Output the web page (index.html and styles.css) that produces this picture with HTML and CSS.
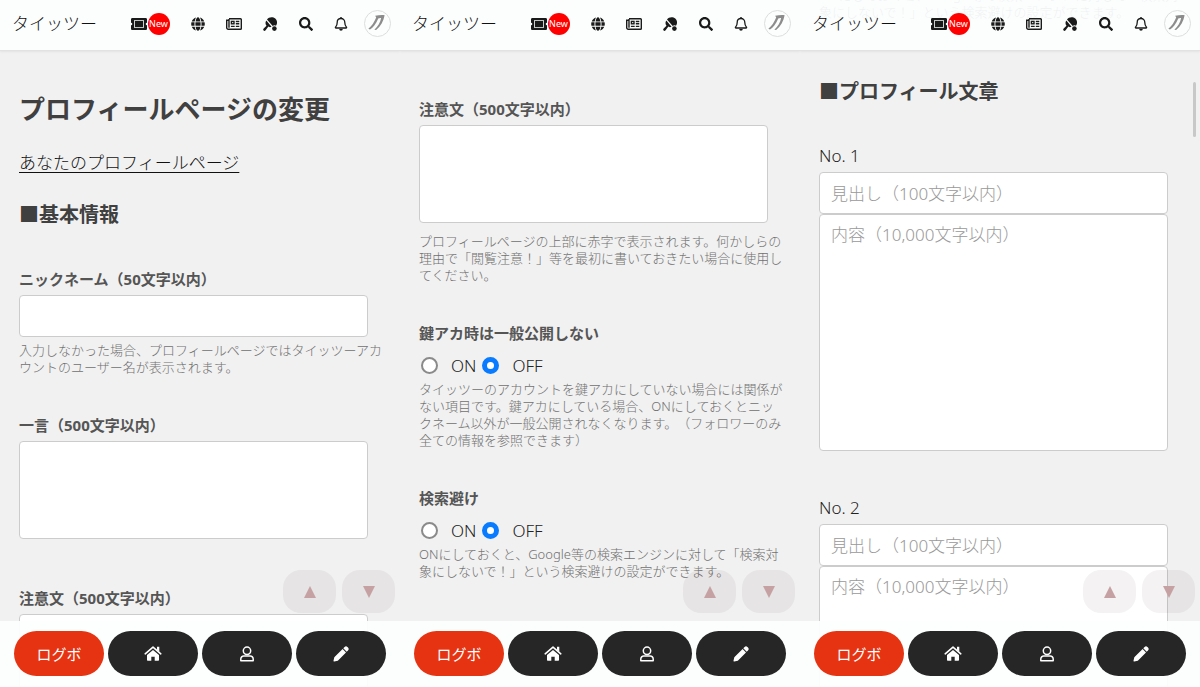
FILE: index.html
```html
<!DOCTYPE html>
<html lang="ja">
<head>
<meta charset="utf-8">
<meta name="viewport" content="width=device-width, initial-scale=1">
<title>プロフィールページの変更</title>
<link rel="stylesheet" href="styles.css">
</head>
<body>
<svg class="sprite" aria-hidden="true">
  <symbol id="i-ticket" viewBox="0 0 16 12">
    <path fill-rule="evenodd" d="M1.300 0h13.400c.7 0 1.300.6 1.300 1.300v3.400a1.300 1.300 0 0 0 0 2.600v3.400c0 .7-.6 1.300-1.300 1.300H1.300C.6 12 0 11.400 0 10.700V7.300a1.300 1.300 0 0 0 0-2.600V1.300C0 .6.600 0 1.300 0zM3 2.200v7.600h10V2.200z"/>
    <rect x="3.800" y="3" width="8.400" height="6"/>
  </symbol>
  <symbol id="i-globe" viewBox="0 0 496 512">
    <path d="M336.500 160C322 70.700 287.800 8 248 8s-74 62.700-88.500 152h177zM152 256c0 22.200 1.200 43.500 3.300 64h185.300c2.100-20.500 3.300-41.800 3.300-64s-1.200-43.500-3.300-64H155.300c-2.100 20.500-3.300 41.800-3.300 64zm324.700-96c-28.600-67.900-86.500-120.400-158-141.600 24.400 33.800 41.200 84.700 50 141.600h108zM177.200 18.400C105.800 39.600 47.800 92.100 19.300 160h108c8.700-56.900 25.500-107.800 49.900-141.600zM487.400 192H372.700c2.100 21 3.300 42.500 3.300 64s-1.200 43-3.300 64h114.600c5.500-20.500 8.600-41.800 8.600-64s-3.100-43.500-8.500-64zM120 256c0-21.500 1.200-43 3.300-64H8.600C3.200 212.500 0 233.800 0 256s3.200 43.500 8.600 64h114.600c-2-21-3.200-42.500-3.200-64zm39.500 96c14.500 89.300 48.700 152 88.500 152s74-62.700 88.500-152h-177zm159.300 141.600c71.400-21.200 129.400-73.700 158-141.600h-108c-8.800 56.900-25.600 107.800-50 141.600zM19.300 352c28.600 67.900 86.500 120.400 158 141.600-24.400-33.800-41.200-84.700-50-141.600h-108z"/>
  </symbol>
  <symbol id="i-news" viewBox="0 0 16 12">
    <g fill="none" stroke="currentColor" stroke-width="1.400">
      <path d="M3 .8h11.500a.8.800 0 0 1 .8.800v8.800a.8.800 0 0 1-.8.800H2.200A1.500 1.500 0 0 1 .7 9.700V2.200H3M3 1v8.700"/>
      <rect x="5.400" y="3.400" width="2.600" height="2.400"/>
      <path d="M9.800 3.500h3.500M9.800 5.800h3.500M4.900 8.400h3.800M9.800 8.400h3.500"/>
    </g>
  </symbol>
  <symbol id="i-pingpong" viewBox="0 0 14 14">
    <path d="M4 2.500C5.800-.2 9.900-.6 12.300 1.600c2.200 2.100 2.200 5.200.7 7.100a3.300 3.300 0 0 0-3.300.3z"/>
    <path d="M3.300 3.500l5.300 6.200-1.700.5-1.500-.8-2.800 3.900c-.6.700-1.400.8-2 .2-.6-.6-.5-1.400.1-2l2.800-2.700C2.200 7.300 2.200 5.200 3.300 3.500z"/>
    <circle cx="11.400" cy="11.600" r="2.300"/>
  </symbol>
  <symbol id="i-search" viewBox="0 0 512 512">
    <path d="M505 442.700L405.300 343c-4.500-4.500-10.600-7-17-7H372c27.600-35.300 44-79.700 44-128C416 93.100 322.900 0 208 0S0 93.100 0 208s93.100 208 208 208c48.300 0 92.700-16.400 128-44v16.300c0 6.400 2.500 12.500 7 17l99.700 99.700c9.400 9.400 24.600 9.400 33.900 0l28.300-28.300c9.400-9.400 9.400-24.600.1-34zM208 336c-70.700 0-128-57.200-128-128 0-70.700 57.200-128 128-128 70.700 0 128 57.200 128 128 0 70.700-57.200 128-128 128z"/>
  </symbol>
  <symbol id="i-bell" viewBox="0 0 14 14">
    <path fill="none" stroke="currentColor" stroke-width="1.300" stroke-linejoin="round" d="M7 1.500c-2.300 0-3.800 1.700-3.800 3.900 0 2.900-.9 3.700-1.700 4.700-.3.400 0 .9.400.9h10.200c.4 0 .7-.5.400-.9-.8-1-1.700-1.800-1.700-4.700 0-2.200-1.500-3.900-3.800-3.900z"/>
    <path d="M6.300 0h1.400v1.700H6.300zM5.200 12h3.600a1.800 1.800 0 0 1-3.600 0z"/>
  </symbol>
  <symbol id="i-avatar" viewBox="0 0 27 27">
    <path fill="#8c8c8c" d="M11 5.200c3.300-.8 6.500-.8 10.200-.7-1.200 6.600-4.200 12-9.200 16l-1.900-.3c4-3.800 6.400-8 7.300-12.700-1.500 0-2.300.1-3.200.8-2.200 5.400-5.300 9.600-8.800 11.600l-1.800-.7C7.200 16.300 10 12 12.100 7z"/>
  </symbol>
  <symbol id="i-home" viewBox="0 0 18 15">
    <path fill="none" stroke="currentColor" stroke-width="1.600" stroke-linecap="round" stroke-linejoin="round" d="M1.200 7.800L9 1.100l7.800 6.700"/>
    <path d="M13 .8h2.300v5L13 3.800zM9 3.900l6 5.200v5a.7.700 0 0 1-.7.700h-3.600v-4H7.300v4H3.700a.7.700 0 0 1-.7-.7v-5z"/>
  </symbol>
  <symbol id="i-user" viewBox="0 0 14 16">
    <g fill="none" stroke="currentColor" stroke-width="1.500" stroke-linejoin="round">
      <circle cx="7" cy="4.800" r="3.700"/>
      <path d="M3.700 10h6.600a2.900 2.900 0 0 1 2.900 2.900v1.900H.8v-1.900A2.900 2.900 0 0 1 3.700 10z"/>
    </g>
  </symbol>
  <symbol id="i-pencil" viewBox="0 0 16 16">
    <path d="M9.600 3l3.400 3.400-8.200 8.300-3.600.8a.6.600 0 0 1-.7-.7l.8-3.600zM10.300 2.300l1.300-1.300a2 2 0 0 1 2.800 0l.6.600a2 2 0 0 1 0 2.800l-1.300 1.300z"/>
  </symbol>
</svg>

<main class="screens">
  <section class="screen">
    <header class="topbar">
      <a class="brand" href="#">タイッツー</a>
      <nav class="tools">
        <a class="tool tool-ticket" href="#" aria-label="チケット"><svg class="icon-wide"><use href="#i-ticket"/></svg><span class="badge">New</span></a>
        <a class="tool" href="#" aria-label="グローバル"><svg class="icon"><use href="#i-globe"/></svg></a>
        <a class="tool" href="#" aria-label="ニュース"><svg class="icon-wide"><use href="#i-news"/></svg></a>
        <a class="tool" href="#" aria-label="ゲーム"><svg class="icon"><use href="#i-pingpong"/></svg></a>
        <a class="tool tool-slim" href="#" aria-label="検索"><svg class="icon"><use href="#i-search"/></svg></a>
        <a class="tool tool-slim" href="#" aria-label="通知"><svg class="icon"><use href="#i-bell"/></svg></a>
        <a class="avatar" href="#" aria-label="アカウント"><svg><use href="#i-avatar"/></svg></a>
      </nav>
    </header>
    <form class="content content-top">
      <h1 class="title">プロフィールページの変更</h1>
      <p class="profile-link"><a href="#">あなたのプロフィールページ</a></p>
      <h2 class="heading">■基本情報</h2>
      <div class="field">
        <label class="label" for="nick">ニックネーム（50文字以内）</label>
        <input class="control" id="nick" type="text">
        <p class="help">入力しなかった場合、プロフィールページではタイッツーアカウントのユーザー名が表示されます。</p>
      </div>
      <div class="field">
        <label class="label" for="word">一言（500文字以内）</label>
        <textarea class="control area" id="word"></textarea>
      </div>
      <div class="field">
        <label class="label" for="caution1">注意文（500文字以内）</label>
        <textarea class="control area" id="caution1"></textarea>
      </div>
    </form>
    <div class="jump">
      <button class="jump-btn" type="button" aria-label="上へ"><svg viewBox="0 0 12 12"><path d="M6 0l6 12H0z"/></svg></button>
      <button class="jump-btn" type="button" aria-label="下へ"><svg viewBox="0 0 12 12"><path d="M0 0h12L6 12z"/></svg></button>
    </div>
    <footer class="bottombar">
      <button class="pill pill-red" type="button">ログボ</button>
      <button class="pill" type="button" aria-label="ホーム"><svg class="pill-home"><use href="#i-home"/></svg></button>
      <button class="pill" type="button" aria-label="プロフィール"><svg class="pill-icon"><use href="#i-user"/></svg></button>
      <button class="pill" type="button" aria-label="投稿"><svg class="pill-icon"><use href="#i-pencil"/></svg></button>
    </footer>
  </section>

  <section class="screen">
    <header class="topbar">
      <a class="brand" href="#">タイッツー</a>
      <nav class="tools">
        <a class="tool tool-ticket" href="#" aria-label="チケット"><svg class="icon-wide"><use href="#i-ticket"/></svg><span class="badge">New</span></a>
        <a class="tool" href="#" aria-label="グローバル"><svg class="icon"><use href="#i-globe"/></svg></a>
        <a class="tool" href="#" aria-label="ニュース"><svg class="icon-wide"><use href="#i-news"/></svg></a>
        <a class="tool" href="#" aria-label="ゲーム"><svg class="icon"><use href="#i-pingpong"/></svg></a>
        <a class="tool tool-slim" href="#" aria-label="検索"><svg class="icon"><use href="#i-search"/></svg></a>
        <a class="tool tool-slim" href="#" aria-label="通知"><svg class="icon"><use href="#i-bell"/></svg></a>
        <a class="avatar" href="#" aria-label="アカウント"><svg><use href="#i-avatar"/></svg></a>
      </nav>
    </header>
    <form class="content content-middle">
      <div class="field">
        <label class="label" for="caution2">注意文（500文字以内）</label>
        <textarea class="control area" id="caution2"></textarea>
        <p class="help">プロフィールページの上部に赤字で表示されます。何かしらの理由で「閲覧注意！」等を最初に書いておきたい場合に使用してください。</p>
      </div>
      <fieldset class="field">
        <legend class="label">鍵アカ時は一般公開しない</legend>
        <div class="choices">
          <label class="choice"><input type="radio" name="locked">ON</label>
          <label class="choice"><input type="radio" name="locked" checked>OFF</label>
        </div>
        <p class="help">タイッツーのアカウントを鍵アカにしていない場合には関係がない項目です。鍵アカにしている場合、ONにしておくとニックネーム以外が一般公開されなくなります。（フォロワーのみ全ての情報を参照できます）</p>
      </fieldset>
      <fieldset class="field">
        <legend class="label">検索避け</legend>
        <div class="choices">
          <label class="choice"><input type="radio" name="noindex">ON</label>
          <label class="choice"><input type="radio" name="noindex" checked>OFF</label>
        </div>
        <p class="help">ONにしておくと、Google等の検索エンジンに対して「検索対象にしないで！」という検索避けの設定ができます。</p>
      </fieldset>
    </form>
    <div class="jump">
      <button class="jump-btn" type="button" aria-label="上へ"><svg viewBox="0 0 12 12"><path d="M6 0l6 12H0z"/></svg></button>
      <button class="jump-btn" type="button" aria-label="下へ"><svg viewBox="0 0 12 12"><path d="M0 0h12L6 12z"/></svg></button>
    </div>
    <footer class="bottombar">
      <button class="pill pill-red" type="button">ログボ</button>
      <button class="pill" type="button" aria-label="ホーム"><svg class="pill-home"><use href="#i-home"/></svg></button>
      <button class="pill" type="button" aria-label="プロフィール"><svg class="pill-icon"><use href="#i-user"/></svg></button>
      <button class="pill" type="button" aria-label="投稿"><svg class="pill-icon"><use href="#i-pencil"/></svg></button>
    </footer>
  </section>

  <section class="screen">
    <header class="topbar">
      <a class="brand" href="#">タイッツー</a>
      <nav class="tools">
        <a class="tool tool-ticket" href="#" aria-label="チケット"><svg class="icon-wide"><use href="#i-ticket"/></svg><span class="badge">New</span></a>
        <a class="tool" href="#" aria-label="グローバル"><svg class="icon"><use href="#i-globe"/></svg></a>
        <a class="tool" href="#" aria-label="ニュース"><svg class="icon-wide"><use href="#i-news"/></svg></a>
        <a class="tool" href="#" aria-label="ゲーム"><svg class="icon"><use href="#i-pingpong"/></svg></a>
        <a class="tool tool-slim" href="#" aria-label="検索"><svg class="icon"><use href="#i-search"/></svg></a>
        <a class="tool tool-slim" href="#" aria-label="通知"><svg class="icon"><use href="#i-bell"/></svg></a>
        <a class="avatar" href="#" aria-label="アカウント"><svg><use href="#i-avatar"/></svg></a>
      </nav>
    </header>
    <form class="content content-bottom">
      <p class="help">ONにしておくと、Google等の検索エンジンに対して「検索対象にしないで！」という検索避けの設定ができます。</p>
      <h2 class="heading">■プロフィール文章</h2>
      <div class="entry">
        <label class="entry-no" for="head1">No. 1</label>
        <input class="control" id="head1" type="text" placeholder="見出し（100文字以内）">
        <textarea class="control area area-tall" aria-label="No. 1 内容" placeholder="内容（10,000文字以内）"></textarea>
      </div>
      <div class="entry">
        <label class="entry-no" for="head2">No. 2</label>
        <input class="control" id="head2" type="text" placeholder="見出し（100文字以内）">
        <textarea class="control area area-tall" aria-label="No. 2 内容" placeholder="内容（10,000文字以内）"></textarea>
      </div>
    </form>
    <div class="thumb"></div>
    <div class="jump">
      <button class="jump-btn" type="button" aria-label="上へ"><svg viewBox="0 0 12 12"><path d="M6 0l6 12H0z"/></svg></button>
      <button class="jump-btn" type="button" aria-label="下へ"><svg viewBox="0 0 12 12"><path d="M0 0h12L6 12z"/></svg></button>
    </div>
    <footer class="bottombar">
      <button class="pill pill-red" type="button">ログボ</button>
      <button class="pill" type="button" aria-label="ホーム"><svg class="pill-home"><use href="#i-home"/></svg></button>
      <button class="pill" type="button" aria-label="プロフィール"><svg class="pill-icon"><use href="#i-user"/></svg></button>
      <button class="pill" type="button" aria-label="投稿"><svg class="pill-icon"><use href="#i-pencil"/></svg></button>
    </footer>
  </section>
</main>
</body>
</html>
```
FILE: styles.css
```css
* {
  box-sizing: border-box;
}

body {
  margin: 0;
  background: #f1f1f1;
  color: #404040;
  font-family: "Noto Sans", "Noto Sans CJK JP", sans-serif;
  font-size: 17px;
  text-spacing-trim: space-all;
}

button,
input,
textarea {
  font: inherit;
  color: inherit;
}

h1,
h2,
p {
  margin: 0;
}

svg {
  display: block;
  fill: currentColor;
}

.sprite {
  position: absolute;
  width: 0;
  height: 0;
}

.screens {
  display: grid;
  grid-template-columns: repeat(3, 1fr);
  height: 100vh;
}

.screen {
  position: relative;
  overflow: hidden;
}

/* Top bar, translucent over the scrolled form */
.topbar {
  position: absolute;
  top: 0;
  left: 0;
  right: 0;
  z-index: 2;
  display: flex;
  align-items: center;
  justify-content: space-between;
  padding: 10px 9px 13px 12px;
  background: rgba(253, 255, 255, 0.9);
  border-bottom: 1px solid #e2e2e2;
  box-shadow: 0 1px 2px rgba(0, 0, 0, 0.06);
}

.brand {
  color: #111;
  line-height: 27px;
  text-decoration: none;
  font-weight: 300;
}

.tools {
  display: flex;
  align-items: center;
}

.tool {
  display: flex;
  align-items: center;
  justify-content: center;
  width: 36px;
  height: 24px;
  color: #1a1a1a;
  text-decoration: none;
}

.tool-slim {
  width: 35px;
}

.tool-ticket {
  gap: 1px;
  width: 40px;
  margin-right: 10px;
}

.icon {
  width: 14px;
  height: 14px;
}

.icon-wide {
  width: 16px;
  height: 12px;
}

.badge {
  width: 22px;
  border-radius: 50%;
  background: #f00;
  color: #fff;
  font-size: 9px;
  line-height: 22px;
  text-align: center;
}

.avatar {
  width: 27px;
  height: 27px;
  margin-left: 6px;
  border: 1px solid #ddd;
  border-radius: 50%;
}

.avatar svg {
  width: 25px;
  height: 25px;
}

/* Form */
.content {
  padding: 0 16px 0 19px;
}

.content-top {
  padding-top: 91px;
}

.content-middle {
  padding-top: 97px;
}

.content-bottom {
  margin-top: -13px;
}

.title {
  font-size: 26px;
  line-height: 36px;
  white-space: nowrap;
}

.profile-link {
  margin: 23px 0 24px;
  line-height: 26px;
}

.profile-link a {
  color: #111;
  font-weight: 300;
  text-underline-offset: 3px;
  text-decoration-thickness: 1px;
}

.heading {
  margin-bottom: 37px;
  font-size: 20px;
  line-height: 30px;
}

.content-bottom .heading {
  margin-top: 56px;
}

.field {
  display: flow-root;
  min-width: 0;
  margin: 0 0 37px;
  padding: 0;
  border: 0;
}

.label {
  display: block;
  margin-bottom: 4px;
  padding: 0;
  color: #555;
  font-size: 15px;
  font-weight: 700;
  line-height: 24px;
}

.control {
  display: block;
  width: calc(100% - 16px);
  height: 42px;
  padding: 8px 11px;
  border: 1px solid #ccc;
  border-radius: 4px;
  background: #fff;
  line-height: 24px;
  resize: none;
}

.control::placeholder {
  color: #999;
  font-weight: 300;
}

.area {
  height: 98px;
  margin-bottom: 10px;
}

.area-tall {
  height: 237px;
}

.help {
  color: #707070;
  font-size: 13px;
  font-weight: 300;
  line-height: 17px;
}

input.control + .help {
  margin-top: 5px;
}

.choices {
  display: flex;
  gap: 4px;
  height: 32px;
}

.choice {
  display: flex;
  align-items: center;
  color: #222;
  font-weight: 300;
}

.choice input {
  appearance: none;
  width: 17px;
  height: 17px;
  margin: 0 13px 0 2px;
  border: 2px solid #8a8a8a;
  border-radius: 50%;
  background: #fff;
}

.choice input:checked {
  border: 5px solid #087bff;
}

.entry {
  margin-bottom: 45px;
}

.entry-no {
  display: block;
  margin-bottom: 4px;
  color: #222;
  font-weight: 300;
  line-height: 24px;
}

/* Floating controls */
.thumb {
  position: absolute;
  top: 82px;
  right: 4px;
  width: 3px;
  height: 55px;
  border-radius: 2px;
  background: #c8c8c8;
}

.jump {
  position: absolute;
  right: 5px;
  bottom: 74px;
  display: flex;
  gap: 6px;
}

.jump-btn {
  display: flex;
  align-items: center;
  justify-content: center;
  width: 53px;
  height: 43px;
  padding: 0;
  border: 0;
  border-radius: 18px;
  background: rgba(30, 0, 0, 0.05);
  color: #c6a1a4;
}

.jump-btn svg {
  width: 12px;
  height: 12px;
}

.bottombar {
  position: absolute;
  right: 0;
  bottom: 0;
  left: 0;
  display: grid;
  grid-template-columns: repeat(4, 1fr);
  gap: 4px;
  padding: 10px 14px 11px;
  background: rgba(253, 255, 255, 0.93);
}

.pill {
  display: flex;
  align-items: center;
  justify-content: center;
  height: 45px;
  padding: 0;
  border: 0;
  border-radius: 23px;
  background: #262626;
  color: #fff;
  font-size: 15px;
}

.pill-red {
  background: #e63312;
}

.pill-home {
  width: 18px;
  height: 15px;
}

.pill-icon {
  width: 16px;
  height: 16px;
}
```
